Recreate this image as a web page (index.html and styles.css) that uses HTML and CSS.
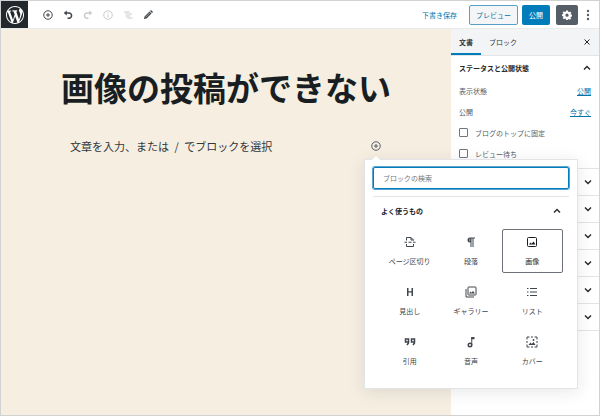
FILE: index.html
```html
<!DOCTYPE html>
<html lang="ja">
<head>
    <meta charset="utf-8">
    <meta name="viewport" content="width=device-width, initial-scale=1.0">
    <title>投稿を編集</title>
    <link rel="stylesheet" href="styles.css">
</head>
<body>
    <header class="toolbar">
        <a href="#" class="logo" aria-label="WordPress">
            <svg viewBox="0 0 20 20"><path d="M20 10c0-5.51-4.49-10-10-10C4.48 0 0 4.49 0 10c0 5.52 4.48 10 10 10 5.51 0 10-4.48 10-10zM7.78 15.37L4.37 6.22c.55-.02 1.17-.08 1.17-.08.5-.06.44-1.13-.06-1.11 0 0-1.45.11-2.37.11-.18 0-.37 0-.58-.01C4.12 2.69 6.87 1.11 10 1.11c2.33 0 4.45.87 6.05 2.34-.68-.11-1.65.39-1.65 1.58 0 .74.45 1.36.9 2.1.35.61.55 1.36.55 2.46 0 1.49-1.4 5-1.4 5l-3.03-8.37c.54-.02.82-.17.82-.17.5-.05.44-1.25-.06-1.22 0 0-1.44.12-2.38.12-.87 0-2.33-.12-2.33-.12-.5-.03-.56 1.2-.06 1.22l.92.08 1.26 3.41zM17.41 10c.24-.64.74-1.87.43-4.25.7 1.29 1.05 2.71 1.05 4.25 0 3.29-1.73 6.24-4.4 7.78.97-2.59 1.94-5.2 2.92-7.78zM6.1 18.09C3.12 16.65 1.11 13.53 1.11 10c0-1.3.23-2.48.72-3.59C3.25 10.3 4.67 14.2 6.1 18.09zm4.03-6.63l2.58 6.98c-.86.29-1.76.45-2.71.45-.79 0-1.57-.11-2.29-.33.81-2.38 1.62-4.74 2.42-7.1z"/></svg>
        </a>
        <div class="tools">
            <button class="tool" aria-label="ブロックの追加"><svg viewBox="0 0 20 20"><path class="line" d="M10 1.5a8.5 8.5 0 1 0 0 17a8.5 8.5 0 1 0 0-17zM10 6v8M6 10h8"/></svg></button>
            <button class="tool" aria-label="元に戻す"><svg viewBox="0 0 20 20"><path d="M7.500 1v10L1.500 6z"/><path class="line thick" d="M6 6h6.500a4.500 4.500 0 0 1 4.500 4.500a5 5 0 0 1-5 6H9"/></svg></button>
            <button class="tool" aria-label="やり直す" disabled><svg viewBox="0 0 20 20"><path d="M12.500 1v10l6-5z"/><path class="line thick" d="M14 6H7.500A4.500 4.500 0 0 0 3 10.500a5 5 0 0 0 5 6h3"/></svg></button>
            <button class="tool" aria-label="情報" disabled><svg viewBox="0 0 20 20"><path class="line" d="M10 1.500a8.500 8.500 0 1 0 0 17a8.500 8.500 0 1 0 0-17zM10 9v6M10 5v2"/></svg></button>
            <button class="tool" aria-label="ブロックナビゲーション" disabled><svg viewBox="0 0 20 20"><path class="line" d="M2 4h11M5 8h13M5 12h9M8 16h11"/></svg></button>
            <button class="tool" aria-label="編集"><svg viewBox="0 0 20 20"><path d="M2 18l1-5L13 3l4 4L7 17zM14 2l1.200-1.200q1-.8 2 0l2 2q.8 1 0 2L18 6z"/><path class="shine" d="M5 14.500l9-9"/></svg></button>
        </div>
        <div class="actions">
            <a href="#" class="save">下書き保存</a>
            <button class="btn preview">プレビュー</button>
            <button class="btn publish">公開</button>
            <button class="btn settings" aria-label="設定">
                <svg viewBox="0 0 20 20"><path fill-rule="evenodd" d="M8 1h4l.5 2.500 1.500.8 2.300-1.300 2.500 3-1.600 2 .3 1 2.500.5v3.500l-2.500.5-.5 1.300 1.500 2.200-2.700 2.500-2.200-1.500-1.300.5L12 20H8l-.5-2.500-1.300-.5-2.200 1.500L1.300 16l1.500-2.200-.5-1.300L0 12V8.500L2.300 8l.5-1L1.200 5l2.600-2.600L6 4l1.500-.5zM10 7a3 3 0 1 0 0 6.500a3 3 0 1 0 0-6.500z"/></svg>
            </button>
            <button class="more" aria-label="ツールと設定"><svg viewBox="0 0 4 12"><circle cx="2" cy="2" r="1.200"/><circle cx="2" cy="6" r="1.200"/><circle cx="2" cy="10" r="1.200"/></svg></button>
        </div>
    </header>

    <div class="editor">
        <main class="canvas">
            <div class="post">
                <h1>画像の投稿ができない</h1>
                <div class="block">
                    <p>文章を入力、または <span class="slash">/</span> でブロックを選択</p>
                    <div class="inserter">
                        <button class="add" aria-label="ブロックの追加"><svg viewBox="0 0 20 20"><path class="line" d="M10 1.500a8.500 8.500 0 1 0 0 17a8.500 8.500 0 1 0 0-17zM10 6v8M6 10h8"/></svg></button>
                        <div class="popover">
                            <input type="text" class="search" placeholder="ブロックの検索" aria-label="ブロックの検索">
                            <button class="group">よく使うもの <svg class="chevron" viewBox="0 0 8 8"><path d="M1 5.500l3-3l3 3"/></svg></button>
                            <div class="blocks">
                                <button class="type"><svg viewBox="0 0 24 24"><path class="line" d="M5 9V3h9l5 5v1M14 3v5h5M5 16v5h14v-5M1 12.500h5M9 12.500h6M18 12.500h5"/></svg>ページ区切り</button>
                                <button class="type"><svg viewBox="0 0 24 24"><path d="M10 3a5 5 0 0 0 0 10h1v9h2V5h2v17h2V5h3V3z"/><path class="shine" d="M9.500 5v6"/></svg>段落</button>
                                <button class="type selected"><svg viewBox="0 0 24 24"><rect class="line" x="3" y="3" width="18" height="18" rx="2"/><path d="M6 17l3-4l2.500 2.500L15 11l4 6z"/></svg>画像</button>
                                <button class="type"><svg viewBox="0 0 24 24"><path d="M6 4h3v6.500h6V4h3v16h-3v-7H9v7H6z"/></svg>見出し</button>
                                <button class="type"><svg viewBox="0 0 24 24"><rect class="line" x="6" y="2" width="16" height="16" rx="1"/><path class="line" d="M2 6v16h16"/><path d="M8 15l3-4l2 2.500L16 10l4 5z"/></svg>ギャラリー</button>
                                <button class="type"><svg viewBox="0 0 24 24"><path class="line" d="M8 5h14M8 12h14M8 19h14M2 5h3M2 12h3M2 19h3"/></svg>リスト</button>
                                <button class="type"><svg viewBox="0 0 24 24"><path class="line thick" d="M3 6h6v6H3zM9 11v3l-3 4M15 6h6v6h-6zM21 11v3l-3 4"/></svg>引用</button>
                                <button class="type"><svg viewBox="0 0 24 24"><path class="line" d="M13.500 3v15"/><path d="M12.500 2H19v4.500h-6.500z"/><circle class="line thick" cx="10" cy="18" r="3.500"/></svg>音声</button>
                                <button class="type"><svg viewBox="0 0 24 24"><path class="line" d="M2 7V2h5M10 2h4M17 2h5v5M22 10v4M22 17v5h-5M14 22h-4M7 22H2v-5M2 14v-4"/><path d="M5 18l4-5l2.500 3L15 12l4 6z"/><circle cx="15" cy="8" r="1.800"/></svg>カバー</button>
                            </div>
                        </div>
                    </div>
                </div>
            </div>
        </main>

        <aside class="sidebar">
            <div class="tabs">
                <button class="tab active">文書</button>
                <button class="tab">ブロック</button>
                <button class="close" aria-label="設定を閉じる"><svg class="chevron" viewBox="0 0 8 8"><path d="M1.500 1.500l5 5M6.500 1.500l-5 5"/></svg></button>
            </div>
            <section class="status">
                <button class="heading">ステータスと公開状態 <svg class="chevron" viewBox="0 0 8 8"><path d="M1 5.500l3-3l3 3"/></svg></button>
                <div class="row">表示状態 <a href="#">公開</a></div>
                <div class="row">公開 <a href="#">今すぐ</a></div>
                <label class="row check"><input type="checkbox"> ブログのトップに固定</label>
                <label class="row check"><input type="checkbox"> レビュー待ち</label>
            </section>
            <button class="panel" aria-label="パーマリンク"><svg class="chevron" viewBox="0 0 8 8"><path d="M1 2.500l3 3l3-3"/></svg></button>
            <button class="panel" aria-label="カテゴリー"><svg class="chevron" viewBox="0 0 8 8"><path d="M1 2.500l3 3l3-3"/></svg></button>
            <button class="panel" aria-label="タグ"><svg class="chevron" viewBox="0 0 8 8"><path d="M1 2.500l3 3l3-3"/></svg></button>
            <button class="panel" aria-label="アイキャッチ画像"><svg class="chevron" viewBox="0 0 8 8"><path d="M1 2.500l3 3l3-3"/></svg></button>
            <button class="panel" aria-label="抜粋"><svg class="chevron" viewBox="0 0 8 8"><path d="M1 2.500l3 3l3-3"/></svg></button>
            <button class="panel" aria-label="ディスカッション"><svg class="chevron" viewBox="0 0 8 8"><path d="M1 2.500l3 3l3-3"/></svg></button>
        </aside>
    </div>
</body>
</html>
```

FILE: styles.css
```css
* {
    box-sizing: border-box;
    margin: 0;
    padding: 0;
}
body {
    display: flex;
    flex-direction: column;
    min-height: 100vh;
    border: 1px solid #d2d2d2;
    background: #fff;
    color: #555d66;
    font-family: "Noto Sans CJK JP", sans-serif;
    font-size: 7px;
    line-height: 12px;
}
button, input {
    font: inherit;
    color: inherit;
    border: none;
    background: none;
}
button {
    cursor: pointer;
}
a {
    color: #0073aa;
}
svg {
    display: block;
    fill: currentColor;
}
.line {
    fill: none;
    stroke: currentColor;
    stroke-width: 2;
}
.thick {
    stroke-width: 3;
}
.shine {
    fill: none;
    stroke: #fff;
    stroke-width: 1;
}
.chevron {
    width: 8px;
    height: 8px;
    fill: none;
    stroke: #23282d;
    stroke-width: 1.4;
}

/* top bar */
.toolbar {
    display: flex;
    align-items: center;
    height: 28px;
    border-bottom: 1px solid #e8eaeb;
}
.logo {
    display: flex;
    align-items: center;
    justify-content: center;
    width: 27px;
    height: 27px;
    background: #23282d;
    color: #fff;
}
.logo svg {
    width: 18px;
    height: 18px;
}
.tools {
    display: flex;
    margin-left: 10px;
}
.tool {
    display: flex;
    align-items: center;
    justify-content: center;
    width: 20px;
    height: 20px;
    color: #40464d;
}
.tool:disabled {
    color: #c8cbce;
    cursor: default;
}
.tool svg {
    width: 10px;
    height: 10px;
}
.actions {
    display: flex;
    align-items: center;
    gap: 4px;
    margin-left: auto;
    padding-right: 9px;
}
.save {
    margin-right: 8px;
    text-decoration: none;
}
.btn {
    display: flex;
    align-items: center;
    justify-content: center;
    height: 20px;
    border-radius: 2px;
}
.preview {
    width: 49px;
    border: 1px solid #5a9fc8;
    background: #f3f5f6;
    color: #0073aa;
}
.publish {
    width: 28px;
    background: #007cba;
    color: #fff;
}
.settings {
    width: 22px;
    margin-left: 2px;
    background: #555d66;
    color: #fff;
}
.settings svg {
    width: 10px;
    height: 10px;
}
.more {
    margin-left: 4px;
}
.more svg {
    width: 4px;
    height: 12px;
}

.editor {
    display: flex;
    flex: 1;
}

/* writing area */
.canvas {
    flex: 1;
    background: #f5eee1;
}
.post {
    max-width: 330px;
    margin: 0 auto;
    padding-top: 34px;
}
h1 {
    color: #191e23;
    font-size: 33px;
    line-height: 48px;
    font-weight: 700;
    white-space: nowrap;
}
.block {
    display: flex;
    align-items: center;
    justify-content: space-between;
    margin-top: 27px;
    padding: 0 10px 0 9px;
}
.block p {
    color: #32373c;
    font-size: 11px;
    line-height: 16px;
}
.slash {
    margin: 0 3px;
}
.inserter {
    position: relative;
}
.add {
    display: block;
}
.add svg {
    width: 10px;
    height: 10px;
}

/* block picker */
.popover {
    position: absolute;
    top: 18px;
    left: -7px;
    z-index: 2;
    width: 214px;
    padding: 7px 8px 15px;
    border: 1px solid #e2e4e7;
    background: #fff;
    box-shadow: 0 3px 16px rgba(25, 30, 35, 0.1);
}
.popover::before {
    content: "";
    position: absolute;
    top: -4px;
    left: 7px;
    border: 4px solid transparent;
    border-top: none;
    border-bottom-color: #fff;
}
.search {
    display: block;
    width: 100%;
    height: 22px;
    padding: 0 9px;
    border: 1px solid #007cba;
    border-radius: 2px;
    box-shadow: 0 0 0 1px #5aa5d0;
    outline: none;
}
.search::placeholder {
    color: #72777c;
    opacity: 1;
}
.group {
    display: flex;
    align-items: center;
    justify-content: space-between;
    width: 100%;
    height: 28px;
    margin-top: 7px;
    padding: 0 8px;
    border-top: 1px solid #e2e4e7;
    color: #23282d;
    font-weight: 700;
}
.blocks {
    display: grid;
    grid-template-columns: repeat(3, 1fr);
    row-gap: 6px;
    margin: 5px 6px 0;
}
.type {
    display: flex;
    flex-direction: column;
    align-items: center;
    gap: 7px;
    height: 44px;
    padding-top: 6px;
    border: 1px solid transparent;
    border-radius: 2px;
    color: #40464d;
}
.type svg {
    width: 12px;
    height: 12px;
}
.type.selected {
    border-color: #6c7178;
    color: #191e23;
}

/* document settings */
.sidebar {
    width: 148px;
    background: #fff;
}
.tabs {
    display: flex;
    height: 27px;
    background: #f3f4f5;
    border-bottom: 1px solid #e2e4e7;
    color: #32373c;
}
.tab {
    padding: 0 8px;
}
.tab.active {
    border-bottom: 2px solid #007cba;
    padding-top: 2px;
    font-weight: 700;
}
.close {
    margin-left: auto;
    padding-right: 8px;
}
.close .chevron {
    stroke-width: 1;
}
.status {
    padding-bottom: 4px;
}
.heading {
    display: flex;
    align-items: center;
    justify-content: space-between;
    width: 100%;
    height: 24px;
    padding: 0 8px;
    color: #23282d;
    font-weight: 700;
}
.row {
    display: flex;
    align-items: center;
    justify-content: space-between;
    height: 21px;
    padding: 0 8px;
}
.check {
    justify-content: flex-start;
    gap: 7px;
}
.check input {
    appearance: none;
    width: 9px;
    height: 9px;
    border: 1px solid #6c7781;
    border-radius: 1px;
}
.panel {
    display: flex;
    align-items: center;
    justify-content: flex-end;
    width: 100%;
    height: 27px;
    padding: 0 7px;
    border-top: 1px solid #e2e4e7;
}
.panel:last-child {
    height: 28px;
    border-bottom: 1px solid #e2e4e7;
}
```
